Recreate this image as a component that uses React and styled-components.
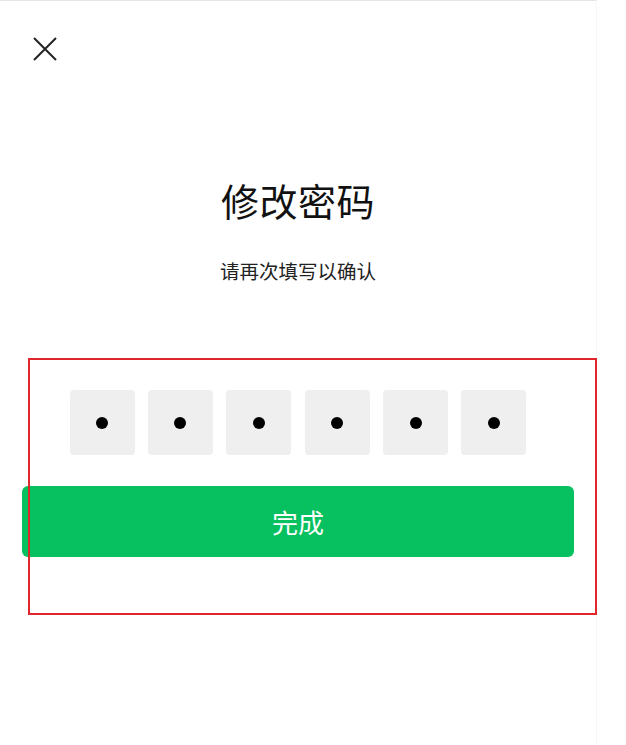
import React from 'react';
import styled, {createGlobalStyle} from 'styled-components';

const GlobalStyle = createGlobalStyle`
  html, body {
    margin: 0;
    padding: 0;
    background: #fff;
  }
  body {
    font-family: "Noto Sans CJK SC", "Noto Sans", sans-serif;
  }
`;

const Screen = styled.div`
  position: relative;
  width: 597px;
  height: 745px;
  border-top: 1px solid #e6e6e6;
  border-right: 1px solid #f7f7f7;
  box-sizing: border-box;
  display: flex;
  flex-direction: column;
  align-items: center;
`;

const TopBar = styled.div`
  align-self: stretch;
  height: 24px;
  padding: 36px 0 0 33px;
`;

const CloseButton = styled.button`
  width: 24px;
  height: 24px;
  padding: 0;
  border: 0;
  background: none;
  cursor: pointer;
  display: block;
`;

const Title = styled.h1`
  margin: 115px 0 0;
  font-size: 38px;
  line-height: 48px;
  font-weight: 400;
  color: #111;
  letter-spacing: 0.5px;
`;

const Subtitle = styled.p`
  margin: 33px 0 0;
  font-size: 19.5px;
  line-height: 28px;
  color: #222;
`;

const PinRow = styled.div`
  display: flex;
  gap: 13.4px;
  margin-top: 105px;
`;

const PinBox = styled.div`
  width: 65px;
  height: 65px;
  border-radius: 4px;
  background: #efefef;
  display: flex;
  align-items: center;
  justify-content: center;
`;

const Dot = styled.span`
  width: 12px;
  height: 12px;
  border-radius: 50%;
  background: #000;
`;

const DoneButton = styled.button`
  margin-top: 31px;
  width: 552px;
  height: 71px;
  border: 0;
  border-radius: 6px;
  background: #07c160;
  color: #fff;
  font-family: inherit;
  font-size: 26px;
  cursor: pointer;
`;

// annotation frame drawn over the pin row and button
const Highlight = styled.div`
  position: absolute;
  left: 28px;
  top: 357px;
  width: 569px;
  height: 257px;
  border: 2px solid #e0262a;
  box-sizing: border-box;
  pointer-events: none;
`;

export default function App() {
  const digits = [1, 2, 3, 4, 5, 6];
  return (
    <>
      <GlobalStyle />
      <Screen>
        <TopBar>
          <CloseButton aria-label="关闭">
            <svg width="24" height="24" viewBox="0 0 24 24">
              <path d="M1 1L23 23M23 1L1 23" stroke="#222" strokeWidth="2" fill="none" />
            </svg>
          </CloseButton>
        </TopBar>
        <Title>修改密码</Title>
        <Subtitle>请再次填写以确认</Subtitle>
        <PinRow>
          {digits.map(d => (
            <PinBox key={d}>
              <Dot />
            </PinBox>
          ))}
        </PinRow>
        <DoneButton>完成</DoneButton>
        <Highlight />
      </Screen>
    </>
  );
}
